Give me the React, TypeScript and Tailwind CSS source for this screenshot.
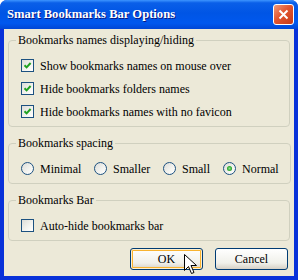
import React from 'react'

const FONT = '[font-family:Liberation_Serif,Times_New_Roman,serif]'

function CheckBox({ checked }: { checked: boolean }) {
  return (
    <span className="flex h-[13px] w-[13px] shrink-0 items-center justify-center border border-[#1c5180] bg-[linear-gradient(135deg,#dcdcd7_0%,#f4f4f0_60%,#ffffff_100%)]">
      {checked && (
        <svg width="9" height="9" viewBox="0 0 9 9">
          <path d="M1.5 4.2 L3.6 6.4 L7.6 2" fill="none" stroke="#21a121" strokeWidth="2" />
        </svg>
      )}
    </span>
  )
}

function Radio({ checked }: { checked: boolean }) {
  return (
    <span className="flex h-[13px] w-[13px] shrink-0 items-center justify-center rounded-full border border-[#1c5180] bg-[linear-gradient(135deg,#dcdcd7_0%,#f4f4f0_60%,#ffffff_100%)]">
      {checked && <span className="h-[5px] w-[5px] rounded-full bg-[radial-gradient(circle,#8ee28e_0%,#21a121_70%)]" />}
    </span>
  )
}

function Group({ title, children }: { title: string; children: React.ReactNode }) {
  return (
    <fieldset className="mx-[4px] rounded-[4px] border border-[#d0d0bf] pl-[7px] pr-[7px] pb-[3px]">
      <legend className="px-[2px] text-[12px] leading-[15px]">{title}</legend>
      {children}
    </fieldset>
  )
}

const CHECKS = [
  { label: 'Show bookmarks names on mouse over', checked: true },
  { label: 'Hide bookmarks folders names', checked: true },
  { label: 'Hide bookmarks names with no favicon', checked: true },
]

const SPACINGS = [
  { label: 'Minimal', w: 'w-[73px]' },
  { label: 'Smaller', w: 'w-[69px]' },
  { label: 'Small', w: 'w-[60px]' },
  { label: 'Normal', w: 'w-[60px]' },
]

export default function App() {
  return (
    <div className={`flex h-[280px] w-[298px] flex-col overflow-hidden rounded-t-[7px] bg-[#0831d9] text-black ${FONT}`}>
      {/* title bar */}
      <div className="flex h-[29px] shrink-0 items-center justify-between bg-[linear-gradient(to_bottom,#3d95ff_0%,#0a5fe8_10%,#0055e5_45%,#0058ee_80%,#0046d5_100%)] pl-[7px] pr-[4px]">
        <span className="text-[12.6px] font-bold leading-none text-white [text-shadow:1px_1px_0_#0a1883]">
          Smart Bookmarks Bar Options
        </span>
        <button className="flex h-[21px] w-[21px] items-center justify-center rounded-[3px] border border-white bg-[linear-gradient(135deg,#f09a7b_0%,#e2552f_45%,#c63a18_100%)]">
          <svg width="11" height="11" viewBox="0 0 11 11">
            <path d="M1.5 1.5 L9.5 9.5 M9.5 1.5 L1.5 9.5" stroke="white" strokeWidth="2" />
          </svg>
        </button>
      </div>

      {/* body */}
      <div className="mx-[4px] mb-[4px] flex flex-1 flex-col bg-[#ece9d8] pt-[4px]">
        <Group title="Bookmarks names displaying/hiding">
          <div className="ml-[5px] flex flex-col pt-[6px]">
            {CHECKS.map((c) => (
              <label key={c.label} className="flex h-[23px] items-center gap-[6px] text-[12px]">
                <CheckBox checked={c.checked} />
                <span>{c.label}</span>
              </label>
            ))}
          </div>
        </Group>

        <div className="h-[9px]" />
        <Group title="Bookmarks spacing">
          <div className="ml-[5px] mt-[6px] flex h-[23px] items-center">
            {SPACINGS.map((s) => (
              <label key={s.label} className={`flex items-center gap-[6px] text-[12px] ${s.w}`}>
                <Radio checked={s.label === 'Normal'} />
                <span>{s.label}</span>
              </label>
            ))}
          </div>
        </Group>

        <div className="h-[9px]" />
        <Group title="Bookmarks Bar">
          <div className="ml-[5px] mt-[6px] flex h-[23px] items-center gap-[6px] text-[12px]">
            <CheckBox checked={false} />
            <span>Auto-hide bookmarks bar</span>
          </div>
        </Group>

        <div className="mt-[7px] flex justify-end gap-[12px] pr-[6px]">
          <button className="relative flex h-[22px] w-[73px] items-center justify-center rounded-[3px] border border-[#003c74] bg-[linear-gradient(to_bottom,#ffffff_0%,#f0f0ea_70%,#d6d0c5_100%)] text-[12px] shadow-[inset_0_0_0_1px_#fff0cf,inset_0_0_0_2px_#f8b330]">
            OK
            <svg className="absolute left-[53px] top-[5px]" width="14" height="22" viewBox="0 0 14 22">
              <path
                d="M0.5 0.5 L0.5 16.5 L4.5 12.5 L7.5 19.5 L10 18.5 L7 11.5 L12.5 11.5 Z"
                fill="white"
                stroke="black"
                strokeWidth="1"
                strokeLinejoin="miter"
              />
            </svg>
          </button>
          <button className="flex h-[22px] w-[73px] items-center justify-center rounded-[3px] border border-[#003c74] bg-[linear-gradient(to_bottom,#ffffff_0%,#f0f0ea_70%,#d6d0c5_100%)] text-[12px]">
            Cancel
          </button>
        </div>
      </div>
    </div>
  )
}
